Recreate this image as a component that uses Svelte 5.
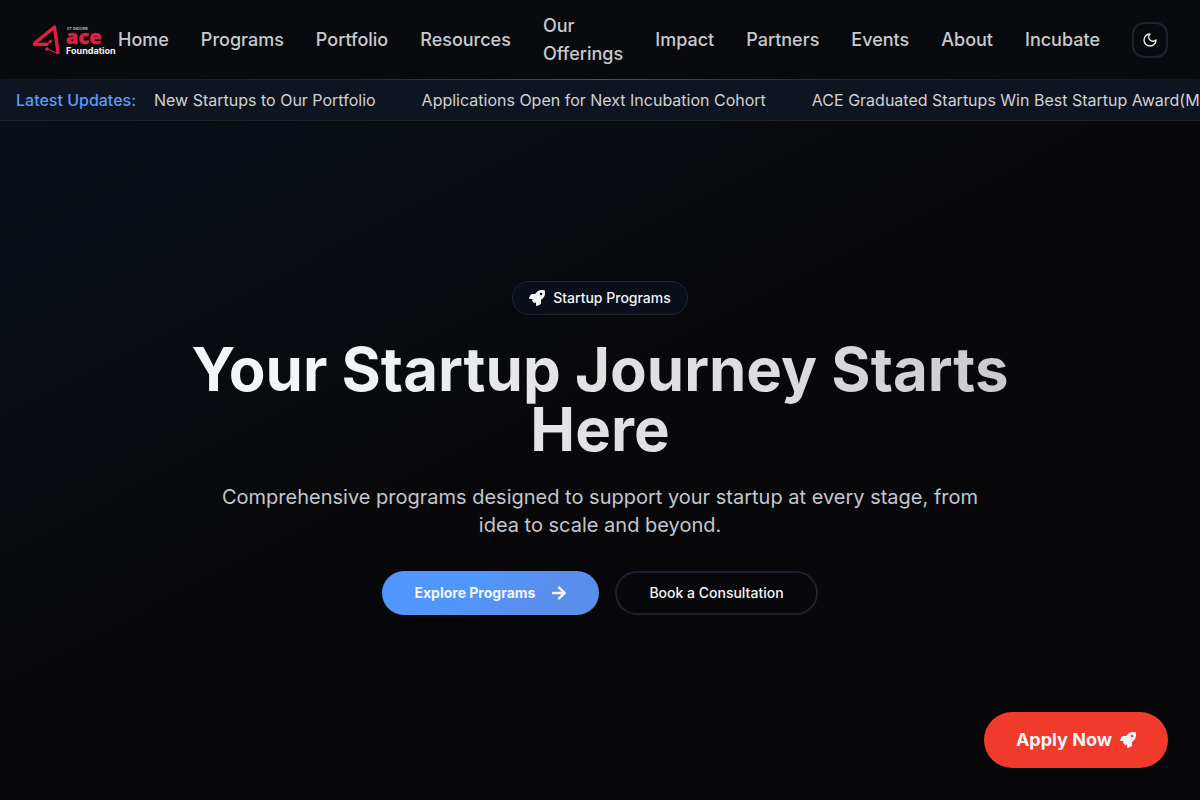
<script lang="ts">
  const links = [
    "Home",
    "Programs",
    "Portfolio",
    "Resources",
    "Our Offerings",
    "Impact",
    "Partners",
    "Events",
    "About",
    "Incubate",
  ];

  const updates = [
    "New Startups to Our Portfolio",
    "Applications Open for Next Incubation Cohort",
    "ACE Graduated Startups Win Best Startup Award(May 2025)",
  ];
</script>

{#snippet rocket()}
  <svg class="icon" viewBox="0 0 512 512" fill="currentColor" aria-hidden="true">
    <path
      d="M505.12 19.094c-1.189-5.531-6.658-11-12.207-12.188C460.716 0 435.507 0 410.407 0 307.175 0 245.269 55.203 199.052 128H94.838c-16.348.016-35.557 11.875-42.887 26.484L2.516 253.297A28.4 28.4 0 0 0 0 264a24.009 24.009 0 0 0 24.006 24h103.81l-22.474 22.469c-11.366 11.361-12.996 32.258 0 45.25l50.904 50.906c11.156 11.188 32.156 13.156 45.277 0l22.475-22.469V488a24.009 24.009 0 0 0 24.006 24 28.559 28.559 0 0 0 10.707-2.516l98.728-49.39c14.629-7.297 26.508-26.5 26.508-42.86V312.797c72.598-46.313 128.035-108.406 128.035-211.094.093-25.203.093-50.406-6.862-82.609zM384.04 168A40 40 0 1 1 424.05 128 40.023 40.023 0 0 1 384.04 168z"
    />
  </svg>
{/snippet}

<div class="page">
  <header>
    <a href="/" class="logo" aria-label="ACE Foundation">
      <svg viewBox="0 0 86 32" width="86" height="32">
        <g fill="none" stroke="#dc1f42" stroke-linejoin="round" stroke-linecap="round">
          <path d="M15 20.2 L3 20.6 Q1.6 20.4 2.8 19.1 L22.5 3 L26 28.5" stroke-width="3.4" />
          <path d="M15 20.5 L18 17.5" stroke-width="1.5" />
          <path d="M15.5 25 L25.5 29.5" stroke-width="1.3" />
        </g>
        <circle cx="18.5" cy="17.3" r="1.6" fill="#dc1f42" />
        <circle cx="15" cy="25" r="1.8" fill="#dc1f42" />
        <text x="35" y="6" font-size="4" font-weight="600" fill="#b8bac0">IIT INDORE</text>
        <text x="34" y="20" class="ace">ace</text>
        <text x="34" y="30" font-size="9" font-weight="700" fill="#f4f5f7">Foundation</text>
      </svg>
    </a>
    <nav>
      {#each links as link}
        <a href="/">{link}</a>
      {/each}
      <button class="theme" type="button" aria-label="Toggle theme">
        <svg class="icon" viewBox="0 0 24 24" fill="none" stroke="currentColor" stroke-width="2" stroke-linecap="round" stroke-linejoin="round">
          <path d="M12 3a6 6 0 0 0 9 9 9 9 0 1 1-9-9Z" />
        </svg>
      </button>
    </nav>
  </header>

  <div class="ticker">
    <span class="ticker-label">Latest Updates:</span>
    <div class="ticker-items">
      {#each updates as update}
        <span>{update}</span>
      {/each}
    </div>
  </div>

  <main>
    <div class="badge">
      {@render rocket()}
      Startup Programs
    </div>
    <h1>Your Startup Journey Starts Here</h1>
    <p>
      Comprehensive programs designed to support your startup at every stage,
      from idea to scale and beyond.
    </p>
    <div class="actions">
      <a href="/" class="btn primary">
        Explore Programs
        <svg class="icon" viewBox="0 0 448 512" fill="currentColor" aria-hidden="true">
          <path
            d="M190.5 66.9l22.2-22.2c9.4-9.4 24.6-9.4 33.9 0L441 239c9.4 9.4 9.4 24.6 0 33.9L246.6 467.3c-9.4 9.4-24.6 9.4-33.9 0l-22.2-22.2c-9.5-9.5-9.3-25 .4-34.3L311.4 296H24c-13.3 0-24-10.7-24-24v-32c0-13.3 10.7-24 24-24h287.4L190.9 101.2c-9.8-9.3-10-24.8-.4-34.3z"
          />
        </svg>
      </a>
      <a href="/" class="btn outline">Book a Consultation</a>
    </div>
  </main>

  <a href="/" class="apply">
    Apply Now
    {@render rocket()}
  </a>
</div>

<style>
  :global(body) {
    margin: 0;
    background: #08080a;
  }

  .page {
    min-height: 100vh;
    display: flex;
    flex-direction: column;
    font-family: Inter, sans-serif;
    color: #f4f5f7;
    background: linear-gradient(153deg, #0b101a 0%, #090d14 24%, #08080a 50%, #08080a 100%);
  }

  a {
    color: inherit;
    text-decoration: none;
  }

  .icon {
    width: 16px;
    height: 16px;
    flex-shrink: 0;
  }

  header {
    display: flex;
    align-items: center;
    justify-content: space-between;
    padding: 12px 32px 11px;
    background: #090a0d;
    border-bottom: 1px solid;
    border-image: linear-gradient(90deg, #0f1520, #252b35 30%, #46515f 50%, #252b35 70%, #0f1520) 1;
  }

  .logo svg {
    display: block;
    overflow: visible;
  }

  .ace {
    font-family: "Open Sans", sans-serif;
    font-size: 20px;
    font-weight: 800;
    fill: #dc1f42;
    stroke: #dc1f42;
    stroke-width: 0.4;
  }

  nav {
    display: flex;
    align-items: center;
    gap: 32px;
    font-size: 18px;
    line-height: 28px;
    font-weight: 500;
    color: #c8cace;
  }

  .theme {
    display: flex;
    align-items: center;
    justify-content: center;
    flex-shrink: 0;
    width: 36px;
    height: 36px;
    padding: 0;
    border: 2px solid #1e2230;
    border-radius: 12px;
    background: transparent;
    color: #f4f5f7;
  }

  .ticker {
    display: flex;
    gap: 18px;
    padding: 8px 0 8px 16px;
    background: #0f1520;
    border-bottom: 1px solid #20242f;
    font-size: 16px;
    line-height: 24px;
    white-space: nowrap;
    overflow: hidden;
  }

  .ticker-label {
    font-weight: 500;
    color: #5b9bf8;
  }

  .ticker-items {
    display: flex;
    gap: 46px;
    color: #cfd1d5;
  }

  main {
    flex: 1;
    display: flex;
    flex-direction: column;
    align-items: center;
    justify-content: center;
    padding: 40px 32px 66px;
    text-align: center;
  }

  .badge {
    display: flex;
    align-items: center;
    gap: 8px;
    padding: 6px 16px;
    border: 1px solid #1e2432;
    border-radius: 999px;
    background: #0b0f19;
    font-size: 14px;
    line-height: 20px;
    font-weight: 500;
  }

  h1 {
    max-width: 896px;
    margin: 24px 0;
    font-size: 60px;
    line-height: 60px;
    font-weight: 700;
    background: linear-gradient(90deg, #f4f5f7 20%, #e0e1e3 50%, #dcdde0 70%, #c4c7cc 100%);
    background-clip: text;
    color: transparent;
  }

  p {
    max-width: 768px;
    margin: 0 0 32px;
    font-size: 20px;
    line-height: 28px;
    color: #c3c7ce;
  }

  .actions {
    display: flex;
    gap: 16px;
  }

  .btn {
    display: flex;
    align-items: center;
    box-sizing: border-box;
    height: 44px;
    padding: 0 32px;
    border-radius: 999px;
    font-size: 14px;
    line-height: 20px;
    font-weight: 500;
  }

  .primary {
    gap: 16px;
    font-weight: 700;
    background: linear-gradient(135deg, #5096fc 40%, #5a8eec 70%);
  }

  .outline {
    border: 2px solid #1e2230;
  }

  .apply {
    position: fixed;
    right: 32px;
    bottom: 32px;
    display: flex;
    align-items: center;
    gap: 8px;
    padding: 14px 32px;
    border-radius: 999px;
    background: #f03a2c;
    font-size: 18px;
    line-height: 28px;
    font-weight: 700;
  }
</style>
